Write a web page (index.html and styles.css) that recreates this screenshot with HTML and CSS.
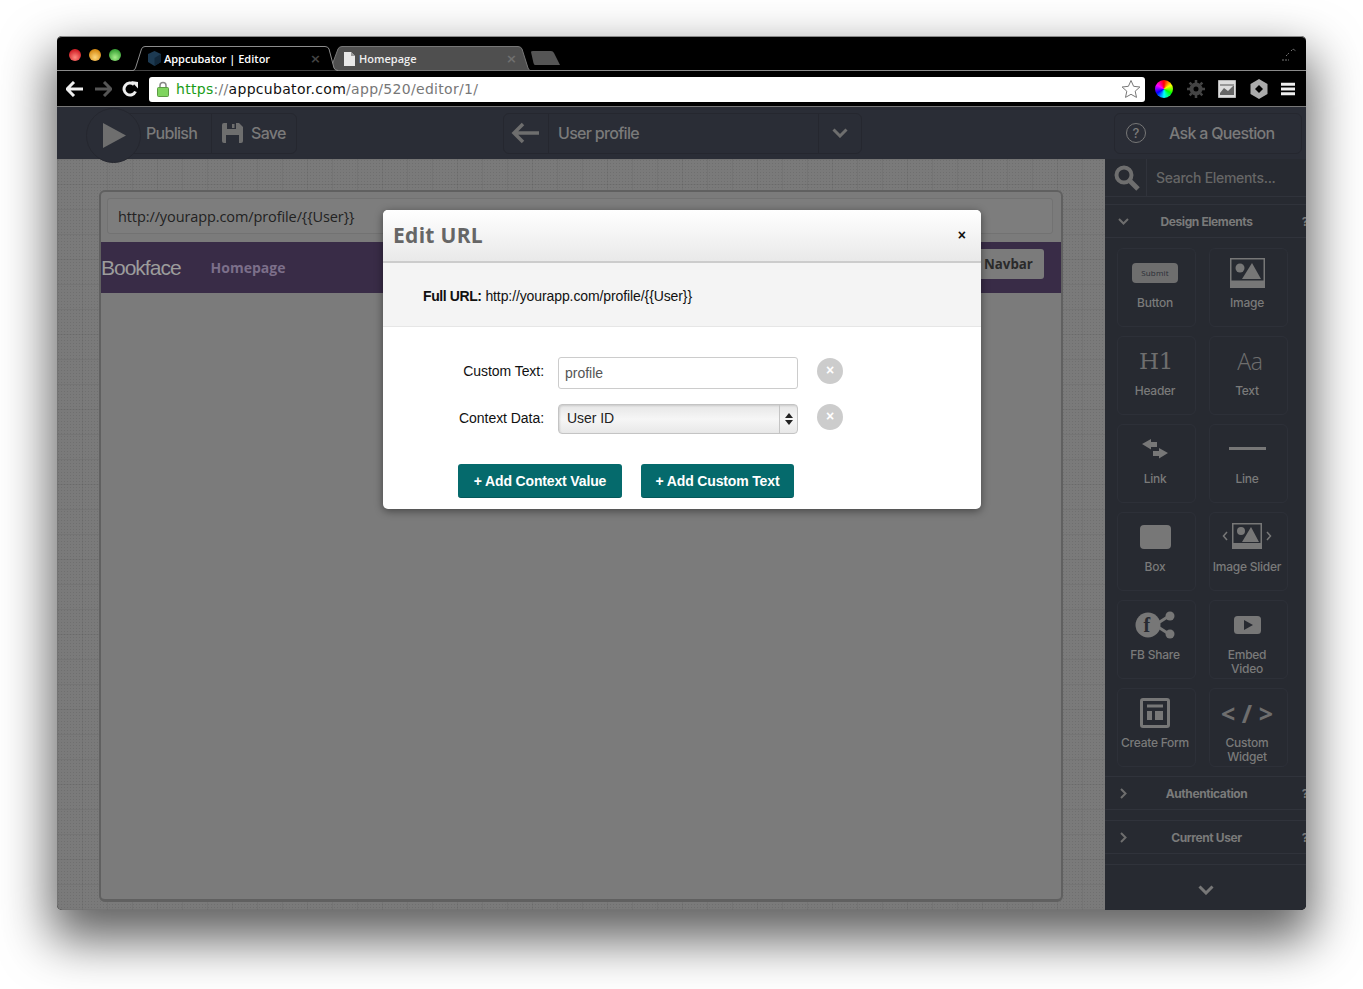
FILE: index.html
```html
<!DOCTYPE html>
<html lang="en">
<head>
    <meta charset="UTF-8">
    <title>Appcubator | Editor</title>
    <link rel="stylesheet" href="styles.css">
</head>
<body>
<div class="window">

    <!-- Tabs -->
    <div class="tabstrip">
        <div class="lights">
            <span class="light red"></span>
            <span class="light yellow"></span>
            <span class="light green"></span>
        </div>
        <div class="tab tab-active">
            <svg class="tab-shape" viewBox="0 0 197 25" preserveAspectRatio="none"><path d="M0 24.500Q1.500 24.500 2.500 22L8.500 3Q9.500 .5 12 .5H192Q195 .5 196 3L201 22Q202 24.500 205 24.500" fill="#000" stroke="#8c8c8c"/></svg>
            <svg class="tab-icon" width="15" height="15" viewBox="0 0 15 15"><path d="M7.500 0L14 3V11L7.500 15L1 11V3Z" fill="#1d3a52"/><path d="M7.500 7L14 3V11L7.500 15Z" fill="#12283b"/></svg>
            <span class="tab-title">Appcubator | Editor</span>
            <span class="tab-close">×</span>
        </div>
        <div class="tab tab-other">
            <svg class="tab-shape" viewBox="0 0 197 25" preserveAspectRatio="none"><path d="M0 24.500L8 3Q9 .5 12 .5H188Q191 .5 192 3L198 22Q199 24.500 200 24.500Z" fill="#4f4f4f" stroke="#777"/></svg>
            <svg class="tab-icon" width="11" height="14" viewBox="0 0 11 14"><path d="M0 0H7L11 4V14H0Z" fill="#e8e8e8"/><path d="M7 0V4H11Z" fill="#999"/></svg>
            <span class="tab-title">Homepage</span>
            <span class="tab-close">×</span>
        </div>
        <svg class="tab-new" width="31" height="15" viewBox="0 0 31 15"><path d="M1 1Q1 0 3 0H21Q23 0 24 2L30 14H5Q4 14 3.500 12Z" fill="#555"/></svg>
        <svg class="fullscreen" width="16" height="16" viewBox="0 0 16 16"><path d="M1 14H8M5 10L8 7M10 5L12 3L15 5" fill="none" stroke="#777" stroke-dasharray="2 1"/></svg>
    </div>

    <!-- Address bar -->
    <div class="toolbar">
        <svg class="nav-icon" width="18" height="16" viewBox="0 0 18 16"><path d="M8 1L1 8L8 15M1 8H17" fill="none" stroke="#eee" stroke-width="3"/></svg>
        <svg class="nav-icon" width="18" height="16" viewBox="0 0 18 16"><path d="M10 1L17 8L10 15M17 8H1" fill="none" stroke="#555" stroke-width="3"/></svg>
        <svg class="nav-icon" width="16" height="16" viewBox="0 0 16 16"><path d="M13.500 10.500A6 6 0 1 1 12 3.500" fill="none" stroke="#eee" stroke-width="3"/><path d="M9 0L16 1V7.500Z" fill="#eee"/></svg>
        <div class="addressbar">
            <svg class="lock" width="12" height="16" viewBox="0 0 12 16"><path d="M3 7V4.500A3 3 0 0 1 9 4.500V7" fill="none" stroke="#888" stroke-width="1.500"/><rect x=".5" y="6.500" width="11" height="9" rx="1" fill="#7fd45f" stroke="#5d9b45"/></svg>
            <span class="url"><span class="url-scheme">https</span><span class="url-rest">://</span><span class="url-host">appcubator.com</span><span class="url-rest">/app/520/editor/1/</span></span>
            <svg class="star" width="20" height="20" viewBox="0 0 20 20"><path d="M10 1.500L12.600 7.300L18.900 8L14.200 12.200L15.500 18.400L10 15.300L4.500 18.400L5.800 12.200L1.100 8L7.400 7.300Z" fill="#fff" stroke="#777"/></svg>
        </div>
        <div class="extensions">
            <span class="wheel"></span>
            <svg width="18" height="18" viewBox="0 0 18 18"><circle cx="9" cy="9" r="4.500" fill="none" stroke="#444" stroke-width="4"/><path d="M9 0V18M0 9H18M2.600 2.600L15.400 15.400M15.400 2.600L2.600 15.400" stroke="#444" stroke-width="2.500" stroke-dasharray="3 12"/></svg>
            <svg width="18" height="18" viewBox="0 0 18 18"><rect x=".5" y=".5" width="17" height="17" fill="#ddd" stroke="#fff" stroke-dasharray="1 1"/><path d="M2 13L6 8L10 11L16 5V15H2Z" fill="#666"/><path d="M2 5H16" stroke="#999" stroke-width="2"/></svg>
            <svg width="18" height="20" viewBox="0 0 18 20"><path d="M9 0L17.500 5V15L9 20L.5 15V5Z" fill="#aaa"/><path d="M9 6L13 10L9 14L5 10Z" fill="#000"/></svg>
            <svg width="14" height="14" viewBox="0 0 14 14"><path d="M0 2.200H14M0 7H14M0 11.800H14" stroke="#eee" stroke-width="3"/></svg>
        </div>
    </div>

    <!-- Cabecalho do editor -->
    <div class="app-header">
        <div class="group group-actions">
            <div class="cell cell-publish">
                <span class="play-circle"><svg width="23" height="25" viewBox="0 0 23 25"><path d="M0 0L23 12.500L0 25Z" fill="#6e6e6e"/></svg></span>
                Publish
            </div>
            <div class="cell cell-save">
                <svg width="21" height="20" viewBox="0 0 21 20"><path d="M2 0H17L21 4V18Q21 20 19 20H2Q0 20 0 18V2Q0 0 2 0Z" fill="#6e6e6e"/><rect x="5" y="0" width="9" height="6" fill="#2a2d36"/><rect x="10" y="1" width="2.500" height="4" fill="#6e6e6e"/><rect x="4" y="12" width="13" height="8" fill="#2a2d36"/></svg>
                Save
            </div>
        </div>
        <div class="group group-page">
            <div class="cell cell-back"><svg width="28" height="22" viewBox="0 0 28 22"><path d="M12 2L3 11L12 20M3 11H28" fill="none" stroke="#6e6e6e" stroke-width="3.500"/></svg></div>
            <div class="cell cell-title">User profile</div>
            <div class="cell cell-more"><svg class="chevron" width="16" height="10" viewBox="0 0 16 10"><path d="M1.500 1.500L8 8L14.500 1.500" fill="none" stroke="#6e6e6e" stroke-width="3"/></svg></div>
        </div>
        <div class="group group-ask">
            <span class="help-circle">?</span>
            Ask a Question
        </div>
    </div>

    <div class="app-main">
        <div class="canvas">
            <div class="frame">
                <div class="url-field">http://yourapp.com/profile/{{User}}</div>
                <div class="navbar">
                    <span class="brand">Bookface</span>
                    <span class="nav-link">Homepage</span>
                    <span class="nav-btn">Navbar</span>
                </div>
            </div>
        </div>

        <div class="sidebar">
            <div class="search">
                <span class="search-icon"><svg width="26" height="26" viewBox="0 0 26 26"><circle cx="10" cy="10" r="7.500" fill="none" stroke="#6e6e6e" stroke-width="4"/><path d="M15.500 15.500L24 24" stroke="#6e6e6e" stroke-width="5"/></svg></span>
                <span class="search-text">Search Elements...</span>
            </div>

            <div class="section section-open">
                <svg width="11" height="7" viewBox="0 0 11 7"><path d="M1 1L5.500 5.500L10 1" fill="none" stroke="#6e6e6e" stroke-width="2"/></svg>
                <span class="section-name">Design Elements</span>
                <span class="section-help">?</span>
            </div>

            <div class="tiles">
                <div class="tile"><div class="tile-icon"><span class="submit-pill">Submit</span></div><span>Button</span></div>
                <div class="tile"><div class="tile-icon"><svg width="35" height="30" viewBox="0 0 35 30"><rect width="35" height="30" fill="#777"/><rect x="1.500" y="1.500" width="32" height="21" fill="#272a31"/><circle cx="10" cy="10" r="4.500" fill="#777"/><path d="M12 21L22 5L31 21Z" fill="#777"/></svg></div><span>Image</span></div>

                <div class="tile"><div class="tile-icon"><span class="glyph-h1">H1</span></div><span>Header</span></div>
                <div class="tile"><div class="tile-icon"><span class="glyph-aa">Aa</span></div><span>Text</span></div>

                <div class="tile"><div class="tile-icon"><svg width="26" height="20" viewBox="0 0 26 20"><path d="M0 5L9 0V3H15V8H9V10.500Z" fill="#777"/><path d="M26 14L17 9V12H11V17H17V19.500Z" fill="#777"/></svg></div><span>Link</span></div>
                <div class="tile"><div class="tile-icon"><span class="glyph-line"></span></div><span>Line</span></div>

                <div class="tile"><div class="tile-icon"><span class="glyph-box"></span></div><span>Box</span></div>
                <div class="tile"><div class="tile-icon"><svg width="50" height="27" viewBox="0 0 50 27"><path d="M5 9L1.500 13L5 17M45 9L48.500 13L45 17" fill="none" stroke="#777" stroke-width="1.500"/><rect x="10" width="30" height="26" fill="#777"/><rect x="11.500" y="1.500" width="27" height="18.500" fill="#272a31"/><circle cx="19" cy="8" r="4" fill="#777"/><path d="M20 19L29 4L37 19Z" fill="#777"/></svg></div><span>Image Slider</span></div>

                <div class="tile"><div class="tile-icon"><span class="fb-share"><svg width="41" height="28" viewBox="0 0 41 28"><path d="M20 14L34 5M20 14L34 23" stroke="#777" stroke-width="3"/><circle cx="13" cy="14" r="12.500" fill="#777"/><circle cx="35" cy="5" r="4.500" fill="#777"/><circle cx="35" cy="23" r="4.500" fill="#777"/></svg><span class="fb-f">f</span></span></div><span>FB Share</span></div>
                <div class="tile"><div class="tile-icon"><svg width="27" height="18" viewBox="0 0 27 18"><rect width="27" height="18" rx="3.500" fill="#777"/><path d="M10 4L19 9L10 14Z" fill="#272a31"/></svg></div><span>Embed<br>Video</span></div>

                <div class="tile"><div class="tile-icon"><svg width="30" height="30" viewBox="0 0 30 30"><rect x="1.500" y="1.500" width="27" height="27" rx="1.500" fill="none" stroke="#777" stroke-width="3"/><path d="M7 8H23" stroke="#777" stroke-width="3"/><rect x="7" y="13" width="5" height="9" fill="#777"/><rect x="15" y="13" width="8" height="9" fill="#777"/></svg></div><span>Create Form</span></div>
                <div class="tile"><div class="tile-icon"><span class="glyph-code">&lt; / &gt;</span></div><span>Custom<br>Widget</span></div>
            </div>

            <div class="section section-auth">
                <svg width="7" height="11" viewBox="0 0 7 11"><path d="M1 1L5.500 5.500L1 10" fill="none" stroke="#6e6e6e" stroke-width="2"/></svg>
                <span class="section-name">Authentication</span>
                <span class="section-help">?</span>
            </div>
            <div class="section section-user">
                <svg width="7" height="11" viewBox="0 0 7 11"><path d="M1 1L5.500 5.500L1 10" fill="none" stroke="#6e6e6e" stroke-width="2"/></svg>
                <span class="section-name">Current User</span>
                <span class="section-help">?</span>
            </div>

            <div class="sidebar-foot">
                <svg width="16" height="10" viewBox="0 0 16 10"><path d="M1.500 1.500L8 8L14.500 1.500" fill="none" stroke="#777" stroke-width="3"/></svg>
            </div>
        </div>
    </div>

    <!-- Modal -->
    <div class="modal">
        <div class="modal-head">
            <h2>Edit URL</h2>
            <span class="modal-close">×</span>
        </div>
        <div class="full-url"><strong>Full URL:</strong> http://yourapp.com/profile/{{User}}</div>
        <div class="modal-form">
            <div class="form-row row-text">
                <label for="customText">Custom Text:</label>
                <input type="text" id="customText" value="profile">
                <span class="clear">×</span>
            </div>
            <div class="form-row row-context">
                <label>Context Data:</label>
                <div class="select">
                    <span class="select-value">User ID</span>
                    <span class="select-arrows"><i class="arrow-up"></i><i class="arrow-down"></i></span>
                </div>
                <span class="clear">×</span>
            </div>
            <div class="modal-actions">
                <button type="button" class="btn-context">+ Add Context Value</button>
                <button type="button" class="btn-text">+ Add Custom Text</button>
            </div>
        </div>
    </div>
</div>
</body>
</html>
```

FILE: styles.css
```css
* {
    box-sizing: border-box;
}
body {
    margin: 0;
    padding: 36px 57px 0;
    height: 989px;
    overflow: hidden;
    background: #fff;
    font-family: "Liberation Sans", Arial, sans-serif;
}
.window {
    position: relative;
    width: 1249px;
    height: 874px;
    display: flex;
    flex-direction: column;
    border-radius: 5px;
    background: #000;
    box-shadow: 0 24px 50px 6px rgba(0, 0, 0, .62);
}

/* tabs */
.tabstrip {
    height: 35px;
    flex: none;
    display: flex;
    align-items: flex-end;
    padding-left: 12px;
    background: #000;
    border-top: 1px solid #8a8a8a;
    border-bottom: 1px solid #8a8a8a;
    border-radius: 5px 5px 0 0;
}
.lights {
    display: flex;
    gap: 8px;
    align-self: flex-start;
    margin-top: 12px;
    margin-right: 12px;
}
.light {
    width: 12px;
    height: 12px;
    border-radius: 50%;
}
.red { background: radial-gradient(circle at 50% 70%, #ff8a80, #d3232a 70%); }
.yellow { background: radial-gradient(circle at 50% 70%, #ffd77a, #d88d17 70%); }
.green { background: radial-gradient(circle at 50% 70%, #a6ee8a, #3fa63a 70%); }
.tab {
    position: relative;
    width: 197px;
    height: 25px;
    margin-bottom: -1px;
    display: flex;
    align-items: center;
    font-family: "Open Sans", sans-serif;
    color: #fff;
}
.tab-active {
    z-index: 1;
}
.tab-shape {
    position: absolute;
    left: 0;
    top: 0;
    width: 100%;
    height: 100%;
    overflow: visible;
}
.tab-icon, .tab-title, .tab-close {
    position: relative;
}
.tab-icon {
    margin-left: 14px;
}
.tab-active .tab-icon {
    margin-right: 2px;
}
.tab-other .tab-icon {
    margin-right: 4px;
}
.tab-title {
    font-weight: 600;
    font-size: 11px;
}
.tab-other {
    color: #eee;
}
.tab-close {
    margin-left: auto;
    margin-right: 9px;
    font-family: "DejaVu Sans", sans-serif;
    font-size: 13px;
    font-weight: bold;
    color: #444;
}
.tab-other .tab-close {
    margin-right: 10px;
    color: #6f6f6f;
}
.tab-new {
    margin-left: 3px;
    margin-bottom: 4px;
}
.fullscreen {
    margin-left: auto;
    margin-right: 9px;
    margin-bottom: 8px;
}

/* address bar */
.toolbar {
    height: 36px;
    flex: none;
    display: flex;
    align-items: center;
    padding: 1px 11px 0 9px;
    background: #000;
    border-bottom: 1px solid #777;
}
.nav-icon {
    margin-right: 10px;
}
.nav-icon:nth-child(3) {
    margin-right: 11px;
}
.addressbar {
    width: 996px;
    height: 25px;
    display: flex;
    align-items: center;
    padding: 0 4px 0 8px;
    background: #fff;
    border-radius: 3px;
}
.lock {
    margin-right: 7px;
}
.url {
    font-family: "DejaVu Sans", sans-serif;
    font-size: 14px;
    letter-spacing: .3px;
}
.url-scheme { color: #1a9c17; }
.url-rest { color: #777; }
.url-host { color: #111; }
.star {
    margin-left: auto;
}
.extensions {
    flex: 1;
    display: flex;
    align-items: center;
    justify-content: space-between;
    padding-left: 10px;
}
.wheel {
    width: 18px;
    height: 18px;
    border-radius: 50%;
    background: conic-gradient(#f00, #ff0, #0f0, #0ff, #00f, #f0f, #f00);
}

/* editor header */
.app-header {
    height: 52px;
    flex: none;
    display: flex;
    align-items: center;
    background: #2a2d36;
    font-family: Inter, sans-serif;
    font-weight: 500;
    font-size: 16px;
    letter-spacing: -.7px;
    color: #7a7a7a;
}
.group {
    height: 41px;
    display: flex;
    align-items: center;
    border: 1px solid #25272f;
    border-radius: 6px;
}
.group-actions {
    width: 197px;
    margin-left: 43px;
}
.group-page {
    width: 359px;
    margin-left: 206px;
}
.group-ask {
    width: 188px;
    margin-left: auto;
    margin-right: 4px;
    padding-left: 11px;
}
.cell {
    height: 100%;
    display: flex;
    align-items: center;
}
.cell + .cell {
    border-left: 1px solid #25272f;
}
.cell-publish {
    position: relative;
    width: 110px;
    padding-left: 45px;
}
.play-circle {
    position: absolute;
    left: -15px;
    top: -6px;
    z-index: 2;
    width: 55px;
    height: 55px;
    display: flex;
    align-items: center;
    justify-content: center;
    padding-left: 1px;
    background: #2a2d36;
    border: 1px solid #25272f;
    border-radius: 50%;
}
.cell-save {
    flex: 1;
    gap: 8px;
    padding-left: 10px;
}
.cell-back {
    width: 44px;
    justify-content: center;
    padding-right: 2px;
}
.cell-title {
    width: 270px;
    padding-left: 9px;
}
.cell-more {
    flex: 1;
    justify-content: center;
}
.help-circle {
    width: 20px;
    height: 20px;
    margin-right: 23px;
    display: flex;
    align-items: center;
    justify-content: center;
    border: 1px solid #777;
    border-radius: 50%;
    font-size: 13px;
    letter-spacing: 0;
}

/* main area */
.app-main {
    flex: 1;
    display: flex;
    min-height: 0;
    border-radius: 0 0 5px 5px;
    overflow: hidden;
}
.canvas {
    flex: 1;
    display: flex;
    padding: 31px 42px 8px;
    background-color: #7a7a7a;
    background-image:
        linear-gradient(rgba(0, 0, 0, .05) 1px, transparent 1px),
        linear-gradient(90deg, rgba(0, 0, 0, .05) 1px, transparent 1px),
        radial-gradient(#6f6f6f .7px, transparent .8px);
    background-size: 25px 25px, 25px 25px, 3px 3px;
}
.frame {
    flex: 1;
    background: #7b7b7b;
    border: 2px solid #606060;
    border-bottom-width: 3px;
    border-radius: 6px;
}
.url-field {
    height: 36px;
    margin: 6px 8px 8px 6px;
    padding-left: 10px;
    background: #7d7d7d;
    border: 1px solid #727272;
    border-radius: 3px;
    font-family: "Open Sans", sans-serif;
    font-size: 14.500px;
    line-height: 35px;
    letter-spacing: -.1px;
    color: #222;
}
.navbar {
    height: 51px;
    display: flex;
    align-items: center;
    background: #392c47;
}
.brand {
    font-size: 21px;
    letter-spacing: -1px;
    color: #9c9c9c;
    margin-right: 30px;
}
.nav-link {
    font-family: "Open Sans", sans-serif;
    font-weight: 700;
    font-size: 14px;
    color: #7c6f8a;
}
.nav-btn {
    margin-left: auto;
    margin-right: 17px;
    margin-bottom: 7px;
    height: 30px;
    width: 72px;
    padding-left: 12px;
    border-radius: 3px;
    background: #7b7b7b;
    font-family: "Open Sans", sans-serif;
    font-weight: 700;
    font-size: 13.300px;
    line-height: 30px;
    color: #2a2a2a;
}

/* sidebar */
.sidebar {
    width: 201px;
    flex: none;
    display: flex;
    flex-direction: column;
    background: #272a31;
    font-family: Inter, sans-serif;
    font-weight: 500;
    color: #7a7a7a;
}
.search {
    height: 38px;
    flex: none;
    display: flex;
    align-items: center;
    border-bottom: 1px solid #30333b;
}
.search-icon {
    width: 42px;
    height: 100%;
    display: flex;
    align-items: center;
    padding-left: 9px;
    border-right: 1px solid #30333b;
}
.search-text {
    padding-left: 9px;
    font-size: 14px;
    letter-spacing: -.3px;
    color: #666;
}
.section {
    height: 34px;
    flex: none;
    display: flex;
    align-items: center;
    position: relative;
    padding-left: 13px;
    border-top: 1px solid #30333b;
    border-bottom: 1px solid #30333b;
    font-size: 12px;
    font-weight: 700;
    letter-spacing: -.4px;
}
.section svg {
    width: 11px;
}
.section-open {
    margin-top: 7px;
}
.section-auth {
    margin-top: 9px;
}
.section-user {
    margin-top: 10px;
}
.section-name {
    flex: 1;
    text-align: center;
    padding-right: 22px;
}
.section-help {
    position: absolute;
    right: -2px;
}
.tiles {
    display: grid;
    grid-template-columns: 79px 79px;
    grid-auto-rows: 79px;
    column-gap: 13px;
    row-gap: 9px;
    padding: 10px 0 0 12px;
}
.tile {
    display: flex;
    flex-direction: column;
    align-items: center;
    padding: 3px 3px 0 0;
    border: 1px solid #2d3038;
    border-radius: 6px;
    font-size: 12px;
    line-height: 14px;
    letter-spacing: -.25px;
    text-align: center;
    white-space: nowrap;
}
.tile-icon {
    height: 41px;
    margin-bottom: 3px;
    flex: none;
    display: flex;
    align-items: center;
    justify-content: center;
}
.submit-pill {
    width: 46px;
    height: 20px;
    border-radius: 4px;
    background: #6e6e6e;
    font-family: "Open Sans", sans-serif;
    font-size: 8px;
    line-height: 20px;
    letter-spacing: .2px;
    color: #2a2d36;
}
.glyph-h1 {
    padding-left: 2px;
    font-family: "DejaVu Serif", serif;
    font-weight: 400;
    font-size: 23px;
    color: #6e6e6e;
}
.glyph-aa {
    font-family: "Open Sans", sans-serif;
    font-weight: 300;
    font-size: 23px;
    color: #6e6e6e;
    padding-left: 6px;
}
.glyph-line {
    width: 37px;
    height: 3px;
    background: #777;
}
.glyph-box {
    width: 31px;
    height: 24px;
    border-radius: 4px;
    background: #777;
}
.fb-share {
    position: relative;
    width: 41px;
    height: 28px;
}
.fb-f {
    position: absolute;
    left: 9px;
    top: 3px;
    font-family: "Liberation Serif", serif;
    font-weight: 700;
    font-size: 20px;
    line-height: 22px;
    color: #272a31;
}
.glyph-code {
    font-family: "Open Sans", sans-serif;
    font-weight: 700;
    font-size: 25px;
    color: #6e6e6e;
    letter-spacing: 0;
}
.sidebar-foot {
    margin-top: 10px;
    padding-top: 4px;
    flex: 1;
    display: flex;
    align-items: center;
    justify-content: center;
    border-top: 1px solid #30333b;
}

/* modal */
.modal {
    position: absolute;
    left: 326px;
    top: 174px;
    width: 598px;
    background: #fff;
    border-radius: 5px;
    box-shadow: 0 2px 8px rgba(0, 0, 0, .45);
    color: #111;
}
.modal-head {
    height: 53px;
    display: flex;
    align-items: center;
    justify-content: space-between;
    padding: 0 15px 2px 10px;
    background: linear-gradient(#fff, #e9e9e9);
    border-bottom: 2px solid #ccc;
    border-radius: 5px 5px 0 0;
}
.modal-head h2 {
    margin: 0;
    font-family: "Open Sans", sans-serif;
    font-size: 21px;
    font-weight: 700;
    letter-spacing: .3px;
    color: #666;
}
.modal-close {
    font-size: 14px;
    font-weight: bold;
    color: #111;
}
.full-url {
    height: 64px;
    padding-left: 40px;
    background: #f4f4f4;
    border-bottom: 1px solid #e6e6e6;
    font-size: 14px;
    line-height: 66px;
    letter-spacing: -.1px;
}
.full-url strong {
    letter-spacing: -.4px;
}
.modal-form {
    padding: 30px 0 11px;
}
.form-row {
    display: flex;
    align-items: flex-start;
    font-size: 14px;
    letter-spacing: -.05px;
}
.form-row label {
    width: 161px;
    margin-right: 14px;
    text-align: right;
    line-height: 28px;
}
.form-row input {
    width: 240px;
    height: 32px;
    padding: 0 6px;
    border: 1px solid #ccc;
    border-radius: 3px;
    font-family: "Liberation Sans", Arial, sans-serif;
    font-size: 14px;
    color: #555;
}
.row-context {
    margin-top: 15px;
}
.select {
    width: 240px;
    height: 30px;
    display: flex;
    align-items: center;
    justify-content: space-between;
    padding: 0 0 2px 8px;
    border: 1px solid #c4c4c4;
    border-radius: 4px;
    background: linear-gradient(#e6e6e6, #f6f6f6 50%, #e8e8e8);
    box-shadow: inset 1px 1px 2px rgba(0, 0, 0, .12);
    color: #222;
}
.select-arrows {
    width: 18px;
    height: 28px;
    margin-bottom: -2px;
    display: flex;
    flex-direction: column;
    align-items: center;
    justify-content: center;
    gap: 2px;
    border-left: 1px solid #c4c4c4;
}
.arrow-up, .arrow-down {
    border-left: 4px solid transparent;
    border-right: 4px solid transparent;
}
.arrow-up {
    border-bottom: 5px solid #222;
}
.arrow-down {
    border-top: 5px solid #222;
}
.clear {
    width: 26px;
    height: 26px;
    margin-left: 19px;
    margin-top: 1px;
    border-radius: 50%;
    background: #ccc;
    color: #fff;
    font-size: 14px;
    font-weight: bold;
    line-height: 24px;
    text-align: center;
}
.row-context .clear {
    margin-top: 0;
}
.modal-actions {
    display: flex;
    gap: 19px;
    margin-top: 30px;
    padding-left: 75px;
}
.modal-actions button {
    height: 34px;
    padding: 0;
    border: 0;
    border-bottom: 1px solid #04585a;
    border-radius: 3px;
    background: #056a6c;
    color: #fff;
    font-family: "Liberation Sans", Arial, sans-serif;
    font-size: 14px;
    font-weight: bold;
    letter-spacing: -.15px;
}
.btn-context {
    width: 164px;
}
.btn-text {
    width: 153px;
}
```
